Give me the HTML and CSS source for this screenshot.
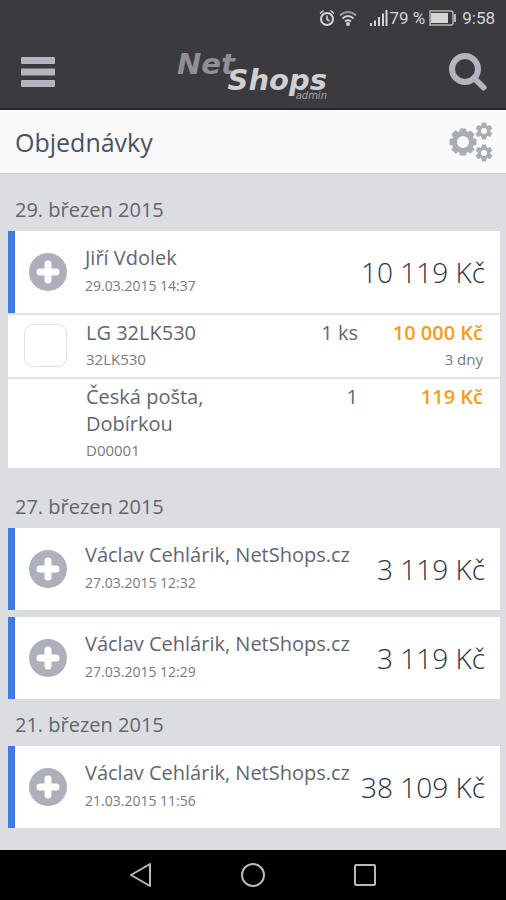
FILE: index.html
```html
<!DOCTYPE html>
<html lang="cs">
<head>
  <meta charset="UTF-8" />
  <meta name="viewport" content="width=device-width, initial-scale=1.0"/>
  <title>Objednávky</title>
  <link rel="stylesheet" href="styles.css">
</head>
<body>

<svg width="0" height="0" class="defs">
  <symbol id="plus" viewBox="0 0 38 38">
    <circle cx="19" cy="19" r="19" fill="#adb0ba"/>
    <path d="M19 11v16M11 19h16" stroke="#fff" stroke-width="7" stroke-linecap="round"/>
  </symbol>
  <symbol id="gear" viewBox="-14 -14 28 28">
    <g fill="#a9adb6">
      <path id="teeth" d="M-3 -13.5h6l1 5h-8zM-3 13.5h6l1 -5h-8z"/>
      <use href="#teeth" transform="rotate(45)"/>
      <use href="#teeth" transform="rotate(90)"/>
      <use href="#teeth" transform="rotate(135)"/>
    </g>
    <circle r="8.5" fill="none" stroke="#a9adb6" stroke-width="5"/>
  </symbol>
  <symbol id="gear-small" viewBox="-9 -9 18 18">
    <g fill="#a9adb6">
      <path id="teeth-small" d="M-2 -8.5h4l1 4h-6zM-2 8.5h4l1 -4h-6z"/>
      <use href="#teeth-small" transform="rotate(60)"/>
      <use href="#teeth-small" transform="rotate(120)"/>
    </g>
    <circle r="4.5" fill="none" stroke="#a9adb6" stroke-width="3"/>
  </symbol>
</svg>

<div class="statusbar">
  <svg class="alarm" width="16" height="18" viewBox="0 0 16 18" fill="none" stroke="#d6d6d9" stroke-width="2">
    <circle cx="8" cy="10" r="6"/>
    <path d="M8 6.500v4l2.500 1.500M1 4.500l3.500 -3M15 4.500l-3.500 -3" stroke-width="1.500"/>
  </svg>
  <svg class="wifi" width="18" height="16" viewBox="0 0 18 16" fill="none" stroke="#d6d6d9" stroke-width="1.800">
    <path d="M1 5.500q8 -7 16 0" stroke="#9b9ba0"/>
    <path d="M3.500 8.500q5.500 -5 11 0M6 11.500q3 -2.500 6 0"/>
    <circle cx="9" cy="14" r="1" fill="#d6d6d9"/>
  </svg>
  <svg class="signal" width="18" height="16" viewBox="0 0 18 16" fill="#d6d6d9">
    <path d="M0 13h2v3h-2zM4 10.500h2v5.500h-2zM8 7h2v9h-2zM12 3.500h2v12.500h-2zM15.500 0h2v16h-2z"/>
  </svg>
  <span>79 %</span>
  <svg class="battery" width="28" height="16" viewBox="0 0 28 16">
    <path d="M1 1h21q2 0 2 2v10q0 2 -2 2h-21z" fill="none" stroke="#b5b5b9" stroke-width="1.500"/>
    <path d="M2 3h17v10h-17z" fill="#d6d6d9"/>
    <path d="M25 4h2v8h-2z" fill="#b5b5b9"/>
  </svg>
  <span>9:58</span>
</div>

<header class="header">
  <button class="icon-btn" aria-label="Menu">
    <svg width="34" height="30" viewBox="0 0 34 30" fill="#b3b4be">
      <rect width="34" height="7" rx="1"/>
      <rect y="11.5" width="34" height="7" rx="1"/>
      <rect y="23" width="34" height="7" rx="1"/>
    </svg>
  </button>
  <a class="logo" href="#">
    <span class="logo-net">Net</span>
    <span class="logo-shops">Shops</span>
    <span class="logo-admin">admin</span>
  </a>
  <button class="icon-btn" aria-label="Hledat">
    <svg width="38" height="38" viewBox="0 0 38 38" fill="none" stroke="#b3b5be">
      <circle cx="16" cy="16" r="13" stroke-width="6"/>
      <path d="M25 25l9.500 9.500" stroke-width="6" stroke-linecap="round"/>
    </svg>
  </button>
</header>

<div class="title-bar">
  <h1>Objednávky</h1>
  <button class="icon-btn" aria-label="Nastavení">
    <svg width="44" height="40" viewBox="0 0 44 40">
      <use href="#gear" x="0" y="6" width="28" height="28"/>
      <use href="#gear-small" x="26" y="0" width="18" height="18"/>
      <use href="#gear-small" x="26" y="22" width="18" height="18"/>
    </svg>
  </button>
</div>

<main class="orders">
  <section>
    <h2>29. březen 2015</h2>
    <div class="order">
      <button class="icon-btn" aria-label="Detail"><svg width="38" height="38"><use href="#plus"/></svg></button>
      <div class="order-info">
        <div class="name">Jiří Vdolek</div>
        <div class="date">29.03.2015 14:37</div>
      </div>
      <div class="total">10 119 Kč</div>
    </div>
    <div class="items">
      <div class="item">
        <input type="checkbox" aria-label="LG 32LK530">
        <div class="item-name">LG 32LK530<small>32LK530</small></div>
        <div class="qty">1 ks</div>
        <div class="price">10 000 Kč<small>3 dny</small></div>
      </div>
      <div class="item">
        <div class="item-name">Česká pošta, Dobírkou<small>D00001</small></div>
        <div class="qty">1</div>
        <div class="price">119 Kč</div>
      </div>
    </div>
  </section>

  <section>
    <h2>27. březen 2015</h2>
    <div class="order">
      <button class="icon-btn" aria-label="Detail"><svg width="38" height="38"><use href="#plus"/></svg></button>
      <div class="order-info">
        <div class="name">Václav Cehlárik, NetShops.cz</div>
        <div class="date">27.03.2015 12:32</div>
      </div>
      <div class="total">3 119 Kč</div>
    </div>
    <div class="order">
      <button class="icon-btn" aria-label="Detail"><svg width="38" height="38"><use href="#plus"/></svg></button>
      <div class="order-info">
        <div class="name">Václav Cehlárik, NetShops.cz</div>
        <div class="date">27.03.2015 12:29</div>
      </div>
      <div class="total">3 119 Kč</div>
    </div>
  </section>

  <section>
    <h2>21. březen 2015</h2>
    <div class="order">
      <button class="icon-btn" aria-label="Detail"><svg width="38" height="38"><use href="#plus"/></svg></button>
      <div class="order-info">
        <div class="name">Václav Cehlárik, NetShops.cz</div>
        <div class="date">21.03.2015 11:56</div>
      </div>
      <div class="total">38 109 Kč</div>
    </div>
  </section>
</main>

<nav class="navbar">
  <button class="icon-btn" aria-label="Zpět">
    <svg width="24" height="24" viewBox="0 0 24 24" fill="none" stroke="#b9b9b9" stroke-width="2"><path d="M21 1v22L2 12z" stroke-linejoin="round"/></svg>
  </button>
  <button class="icon-btn" aria-label="Domů">
    <svg width="24" height="24" viewBox="0 0 24 24" fill="none" stroke="#b9b9b9" stroke-width="2"><circle cx="12" cy="12" r="11"/></svg>
  </button>
  <button class="icon-btn" aria-label="Přehled">
    <svg width="24" height="24" viewBox="0 0 24 24" fill="none" stroke="#b9b9b9" stroke-width="2"><rect x="2" y="2" width="20" height="20" rx="1"/></svg>
  </button>
</nav>

</body>
</html>
```
FILE: styles.css
```css
* {
  box-sizing: border-box;
  margin: 0;
  padding: 0;
}
body {
  display: flex;
  flex-direction: column;
  min-height: 100vh;
  font-family: "Open Sans", sans-serif;
  font-size: 20px;
  color: #62666f;
  background-color: #dcdde1;
}
svg {
  display: block;
}
.defs {
  position: absolute;
}
.icon-btn {
  background: none;
  border: none;
  cursor: pointer;
}
.statusbar {
  display: flex;
  align-items: center;
  justify-content: flex-end;
  height: 36px;
  padding: 0 11px;
  background-color: #3b3a3f;
  color: #d6d6d9;
  font-family: Roboto, sans-serif;
  font-size: 17px;
}
.wifi {
  margin: 0 13px 0 4px;
}
.signal {
  margin-right: 1px;
}
.battery {
  margin: 0 5px 0 4px;
}
.header {
  display: flex;
  align-items: center;
  justify-content: space-between;
  height: 74px;
  padding: 0 19px 0 21px;
  background-color: #3b3a3f;
  border-bottom: 2px solid #25233a;
}
.logo {
  display: flex;
  flex-direction: column;
  width: 150px;
  padding-top: 14px;
  font-family: "DejaVu Sans", sans-serif;
  font-size: 29px;
  font-style: italic;
  font-weight: bold;
  line-height: 16px;
  text-decoration: none;
  color: #d0d0d3;
}
.logo-net {
  color: #8f8f95;
}
.logo-shops {
  align-self: flex-end;
}
.logo-admin {
  align-self: flex-end;
  padding-top: 2px;
  font-size: 10px;
  font-weight: normal;
  line-height: 12px;
  color: #a5a5aa;
}
.title-bar {
  display: flex;
  align-items: center;
  justify-content: space-between;
  height: 64px;
  padding: 0 13px 0 15px;
  background-color: #fafafa;
  border-bottom: 1px solid #d0d2d6;
}
h1 {
  font-size: 25px;
  font-weight: normal;
  color: #4a5162;
}
.orders {
  flex: 1;
  padding: 17px 6px 0 8px;
}
h2 {
  padding: 5px 7px 7px;
  font-size: 20px;
  font-weight: normal;
  line-height: 28px;
}
.order {
  display: flex;
  align-items: center;
  height: 82px;
  margin-bottom: 7px;
  padding: 0 15px 0 14px;
  background-color: #fff;
  border-left: 7px solid #3f7ae6;
}
.order-info {
  flex: 1;
  margin-left: 18px;
  line-height: 28px;
}
.date {
  font-size: 14px;
  color: #777a80;
}
.total {
  font-size: 28px;
  font-weight: 300;
  color: #2c3244;
}
.items {
  margin: -7px 0 20px;
  background-color: #fff;
}
.item {
  display: grid;
  grid-template-columns: 78px 1fr 90px 125px;
  padding: 4px 17px 5px 0;
  line-height: 27px;
  border-top: 2px solid #e3e4e7;
}
.item input {
  appearance: none;
  align-self: center;
  width: 43px;
  height: 43px;
  margin-left: 16px;
  border: 1px solid #e0e1e3;
  border-radius: 9px;
}
.item-name {
  grid-column: 2;
}
.item small {
  display: block;
  font-size: 15px;
  font-weight: normal;
  line-height: 26px;
  color: #777a80;
}
.qty, .price {
  text-align: right;
}
.price {
  font-weight: 600;
  color: #f79c1c;
}
.navbar {
  display: flex;
  align-items: center;
  justify-content: center;
  gap: 88px;
  height: 50px;
  background-color: #000;
}
```
